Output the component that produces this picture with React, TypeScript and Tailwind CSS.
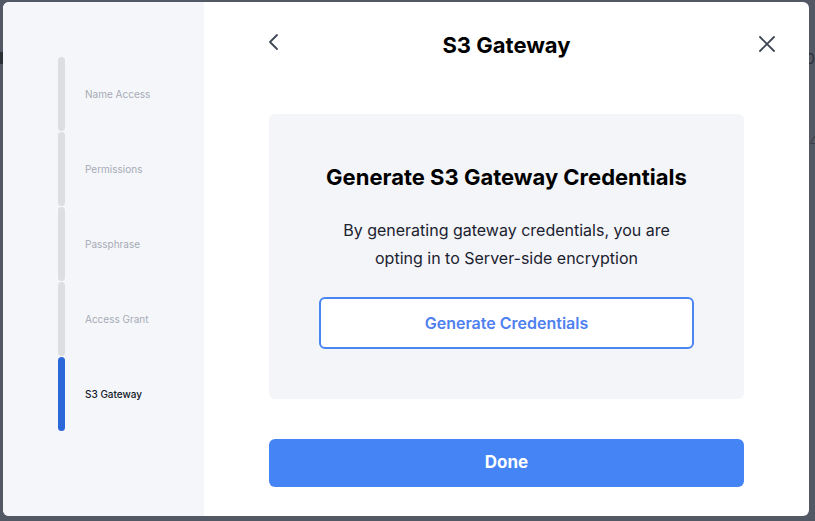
import React from "react";

const steps = ["Name Access", "Permissions", "Passphrase", "Access Grant", "S3 Gateway"];

export default function App() {
  return (
    <div
      className="relative w-[815px] h-[521px] overflow-hidden bg-[#535964] pt-[2px] pl-[3px]"
      style={{ fontFamily: "Inter, 'Noto Sans', sans-serif" }}
    >
      <div className="absolute left-0 top-[52px] w-[3px] h-[12px] bg-[#2b2f36]" />
      <div className="absolute left-[806px] top-[48px] text-[14px] text-[#2b2f36]">05</div>
      <div className="absolute left-[809px] top-[132px] text-[11px] text-[#3a3f47]">△</div>
      <div className="relative flex w-[806px] h-[514px] rounded-[6px] overflow-hidden bg-white">
        {/* Sidebar */}
        <div className="w-[201px] shrink-0 bg-[#f5f6fa] pt-[55px] pl-[55px]">
          {steps.map((s, i) => {
            const active = i === steps.length - 1;
            return (
              <div key={s} className="flex h-[75px] items-center">
                <div
                  className={`w-[7px] h-[74px] self-start rounded-full ${
                    active ? "bg-[#2c67d9]" : "bg-[#dcdee2]"
                  }`}
                />
                <span
                  className={`ml-[20px] text-[10px] ${
                    active ? "text-[#111827] font-medium" : "text-[#a5abb5]"
                  }`}
                >
                  {s}
                </span>
              </div>
            );
          })}
        </div>

        {/* Main */}
        <div className="flex-1 flex flex-col">
          <div className="grid grid-cols-[1fr_auto_1fr] items-center mt-[26px] h-[34px]">
            <div className="ml-[63px] flex items-center text-[#3f4654] -mt-[6px]">
              <svg width="14" height="18" viewBox="0 0 14 18" fill="none">
                <path d="M10 2 L3 9 L10 16" stroke="currentColor" strokeWidth="1.8" strokeLinecap="round" strokeLinejoin="round" />
              </svg>
            </div>
            <h1 className="text-[22px] font-bold text-black leading-[34px]">S3 Gateway</h1>
            <div className="justify-self-end mr-[33px] flex items-center text-[#3f4654] -mt-[2px]">
              <svg width="18" height="18" viewBox="0 0 18 18" fill="none">
                <path d="M2 2 L16 16 M16 2 L2 16" stroke="currentColor" strokeWidth="1.8" strokeLinecap="round" />
              </svg>
            </div>
          </div>

          <div className="mx-[65px] mt-[52px] flex flex-col gap-[40px]">
            <div className="rounded-[6px] bg-[#f4f5f8] pt-[48px] pb-[50px] flex flex-col items-center">
              <h2 className="text-[22px] font-bold leading-[30px] text-black">
                Generate S3 Gateway Credentials
              </h2>
              <p className="mt-[24px] text-[16px] leading-[28px] text-[#1b2230] text-center">
                By generating gateway credentials, you are
                <br />
                opting in to Server-side encryption
              </p>
              <button className="mt-[25px] w-[375px] h-[52px] rounded-[6px] border-2 border-[#4a86f2] bg-white text-[16px] font-semibold text-[#4f80ef]">
                Generate Credentials
              </button>
            </div>
            <button className="h-[48px] rounded-[6px] bg-[#4584f5] text-white text-[17px] font-bold">
              Done
            </button>
          </div>
        </div>
      </div>
    </div>
  );
}
